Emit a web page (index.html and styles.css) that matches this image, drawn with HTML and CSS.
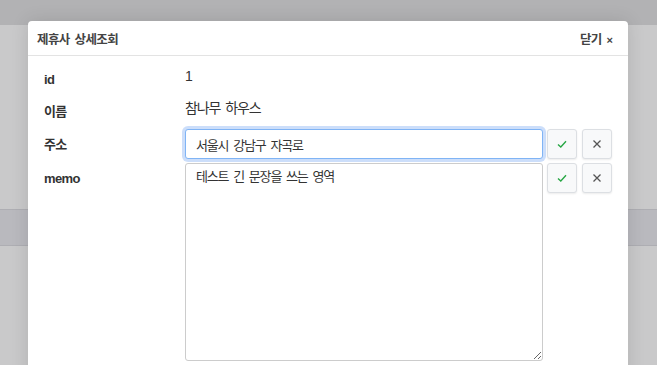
FILE: index.html
```html
<!DOCTYPE html>
<html lang="ko">
<head>
    <meta charset="UTF-8">
    <meta name="viewport" content="width=device-width, initial-scale=1.0">
    <title>제휴사 상세조회</title>
    <link rel="stylesheet" href="styles.css">
</head>
<body>
    <div class="page">
        <div class="page-top"></div>
        <div class="page-body"></div>
        <div class="page-band"></div>
        <div class="page-rest"></div>
    </div>

    <div class="modal">
        <div class="modal-header">
            <span class="modal-title">제휴사 상세조회</span>
            <span class="modal-close">닫기 <b>×</b></span>
        </div>
        <div class="modal-body">
            <div class="label">id</div>
            <div class="value">1</div>

            <div class="label">이름</div>
            <div class="value">참나무 하우스</div>

            <div class="label">주소</div>
            <div class="edit-row">
                <input class="field focused" type="text" value="서울시 강남구 자곡로">
                <button class="icon-btn ok"><svg width="12" height="12" viewBox="0 0 12 12"><path d="M2 6.5 L4.8 9 L10 3.2" fill="none" stroke="#28a745" stroke-width="1.4"/></svg></button>
                <button class="icon-btn"><svg width="12" height="12" viewBox="0 0 12 12"><path d="M2.5 2.5 L9.5 9.5 M9.5 2.5 L2.5 9.5" fill="none" stroke="#555" stroke-width="1.3"/></svg></button>
            </div>

            <div class="label">memo</div>
            <div class="edit-row">
                <textarea class="field memo">테스트 긴 문장을 쓰는 영역</textarea>
                <button class="icon-btn ok"><svg width="12" height="12" viewBox="0 0 12 12"><path d="M2 6.5 L4.8 9 L10 3.2" fill="none" stroke="#28a745" stroke-width="1.4"/></svg></button>
                <button class="icon-btn"><svg width="12" height="12" viewBox="0 0 12 12"><path d="M2.5 2.5 L9.5 9.5 M9.5 2.5 L2.5 9.5" fill="none" stroke="#555" stroke-width="1.3"/></svg></button>
            </div>
        </div>
    </div>
</body>
</html>
```

FILE: styles.css
```css
body { margin: 0; font-family: "Liberation Sans", "Noto Sans CJK KR", sans-serif; color: #333; overflow: hidden; }
.page { height: 365px; background-color: #c9c9ca; }
.page-top { height: 25px; background-color: #b2b2b4; }
.page-body { height: 184px; }
.page-band { height: 35px; background-color: #b9b9be; border-top: 1px solid #aeaeb3; border-bottom: 1px solid #aeaeb3; }

.modal { position: absolute; left: 28px; top: 21px; width: 600px; height: 360px; background-color: #fff; border-radius: 4px 4px 0 0; box-shadow: 0 0 18px rgba(0,0,0,0.12); }
.modal-header { height: 34px; border-bottom: 1px solid #e3e3e3; display: flex; justify-content: space-between; align-items: center; padding: 0 15px 0 9px; font-size: 12.5px; font-weight: 600; color: #444; letter-spacing: -0.6px; word-spacing: 2px; }
.modal-close b { font-size: 11px; letter-spacing: 0; }

.modal-body { display: grid; grid-template-columns: 141px 1fr; grid-template-rows: 32px 33px 34px auto; padding: 8px 16px 0 16px; }
.label { font-size: 13px; font-weight: 700; line-height: 24px; padding-top: 4px; letter-spacing: -0.6px; }
.value { font-size: 14px; line-height: 24px; letter-spacing: -1.1px; word-spacing: 2px; }

.edit-row { display: flex; align-items: flex-start; gap: 5px; }
.field { flex: 1; box-sizing: border-box; font-family: inherit; font-size: 13px; letter-spacing: -1.2px; word-spacing: 2.5px; color: #333; border: 1px solid #ccc; border-radius: 3px; padding: 4px 10px; margin: 0; }
.field.focused { height: 30px; border-color: #80b4f5; box-shadow: 0 0 0 3px rgba(110,160,240,0.35); outline: none; }
.memo { height: 198px; resize: vertical; padding-top: 4px; line-height: 18px; }
.field + .icon-btn { margin-left: -1px; }
.icon-btn { width: 30px; height: 30px; padding: 0; display: flex; align-items: center; justify-content: center; background-color: #f8f9fa; border: 1px solid #dcdfe3; border-radius: 3px; box-shadow: 0 1px 2px rgba(0,0,0,0.08); }
```
